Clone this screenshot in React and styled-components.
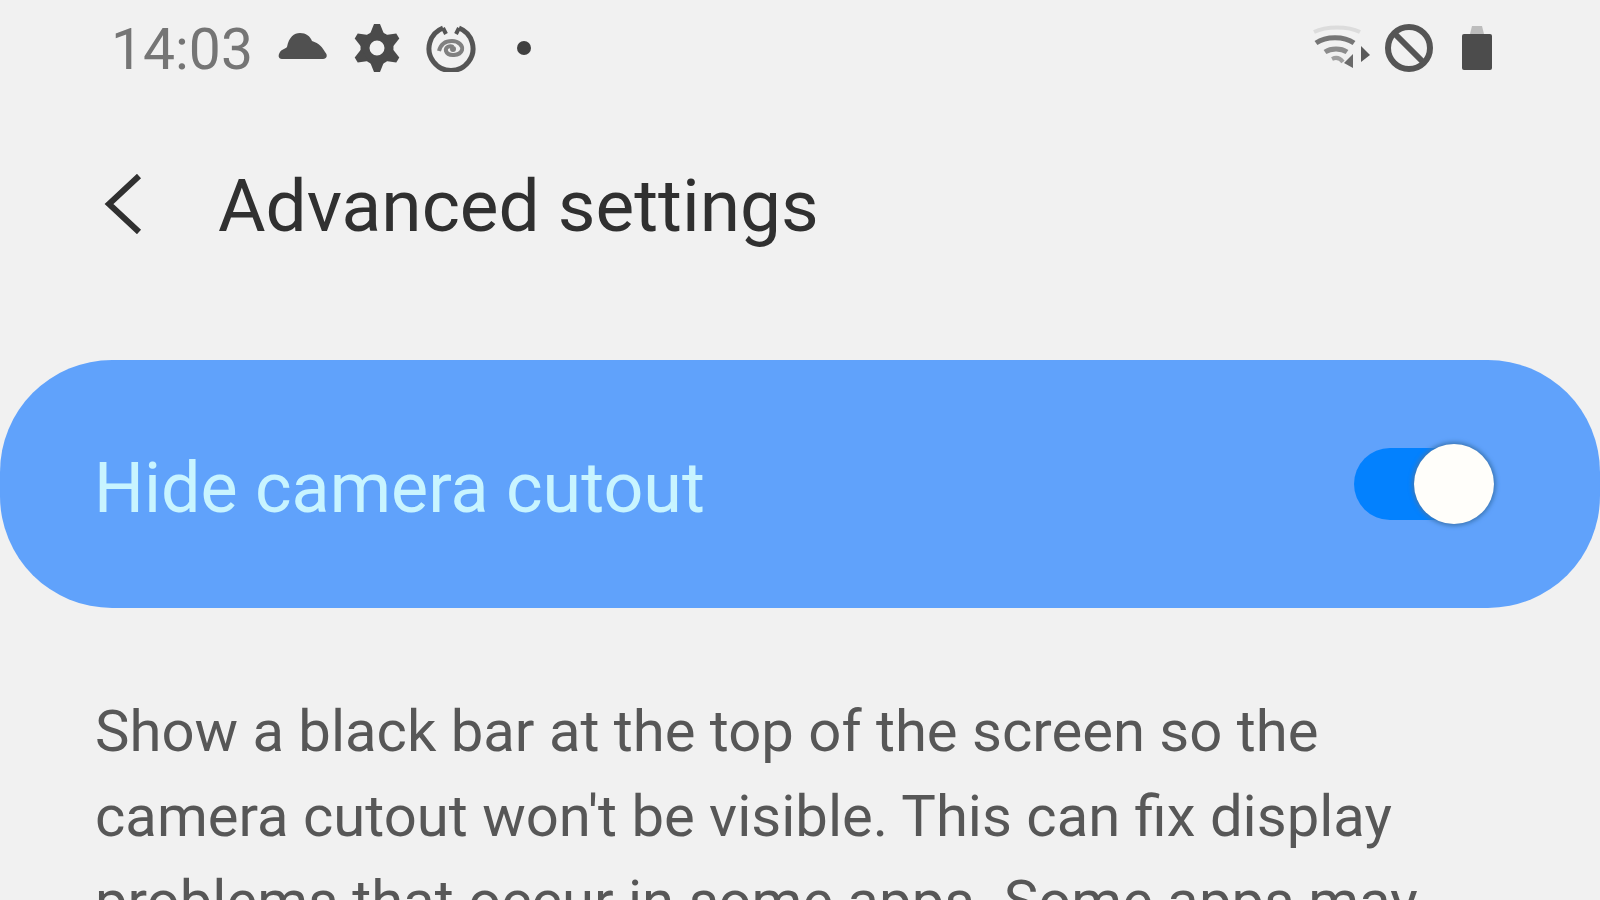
import React, { useState } from "react";
import styled, { createGlobalStyle } from "styled-components";

const GlobalStyle = createGlobalStyle`
  body {
    margin: 0;
    background: #f1f1f1;
  }
  * {
    box-sizing: border-box;
  }
`;

function CloudIcon() {
  return (
    <svg width='50' height='48' viewBox='0 0 50 48' aria-hidden='true'>
      <path
        d='M4 35 C0 35 0 31 2 28 C4 25 7 25 9 23 C11 13 16 9 22 9 C28 9 32 12 34 17 C41 19 45 24 47 28 C50 31 49 35 45 35 Z'
        fill='#505050'
      />
    </svg>
  );
}

function GearIcon() {
  const teeth = [0, 60, 120, 180, 240, 300];
  return (
    <svg width='48' height='48' viewBox='0 0 48 48' aria-hidden='true'>
      <circle cx='24' cy='24' r='12' fill='none' stroke='#4a4a4a' strokeWidth='9' />
      {teeth.map((angle) => (
        <path
          key={angle}
          d='M21 0 H27 L31 10 H17 Z'
          fill='#4a4a4a'
          transform={`rotate(${angle} 24 24)`}
        />
      ))}
    </svg>
  );
}

function SwirlIcon() {
  return (
    <svg width='50' height='48' viewBox='0 0 50 48' fill='none' aria-hidden='true'>
      <path d='M17 4 A22 22 0 1 0 33 4' stroke='#555' strokeWidth='5' />
      <path d='M17 4 L20 10 M33 4 L30 10' stroke='#555' strokeWidth='4' />
      <path
        d='M13 27 C15 19 20 17 26 17 C33 17 37 22 36 26 C34 32 22 33 20 27 C19 23 24 21 27 23'
        stroke='#808080'
        strokeWidth='4'
      />
      <circle cx='27' cy='25' r='3' fill='#808080' />
    </svg>
  );
}

function WifiIcon() {
  return (
    <svg width='58' height='48' viewBox='0 0 58 48' fill='none' aria-hidden='true'>
      <path d='M2 8 C14 2 36 2 48 8' stroke='#dcdcdc' strokeWidth='4' />
      <path d='M4 19 C14 12 32 12 42 19' stroke='#757575' strokeWidth='5' />
      <path d='M13 28 C19 24 29 24 35 28' stroke='#8c8c8c' strokeWidth='5' />
      <path d='M20 35 C24 33 28 34 31 38' stroke='#a0a0a0' strokeWidth='4' />
      <path d='M41 30 V44 L32 39 Z' fill='#6a6a6a' />
      <path d='M49 22 L58 31 L49 38 Z' fill='#5a5a5a' />
    </svg>
  );
}

function BlockedIcon() {
  return (
    <svg width='50' height='50' viewBox='0 0 50 50' fill='none' aria-hidden='true'>
      <circle cx='25' cy='25' r='21' stroke='#555' strokeWidth='6' />
      <path d='M10 10 L40 40' stroke='#555' strokeWidth='6' />
    </svg>
  );
}

function BatteryIcon() {
  return (
    <svg width='44' height='48' viewBox='0 0 44 48' aria-hidden='true'>
      <path d='M24 2 H34 L36 10 H22 Z' fill='#bdbdbd' />
      <path d='M16 10 H42 Q44 10 44 12 V44 Q44 46 42 46 H16 Q14 46 14 44 V12 Q14 10 16 10 Z' fill='#4c4c4c' />
    </svg>
  );
}

function BackIcon() {
  return (
    <svg width='38' height='60' viewBox='0 0 38 60' fill='none' aria-hidden='true'>
      <path d='M35 2 L5 30 L35 58' stroke='#303030' strokeWidth='6' />
    </svg>
  );
}

export default function App() {
  const [hidden, setHidden] = useState(true);

  return (
    <Screen>
      <GlobalStyle />
      <StatusBar>
        <StatusGroup>
          <Clock>14:03</Clock>
          <CloudIcon />
          <GearIcon />
          <SwirlIcon />
          <MoreDot />
        </StatusGroup>
        <StatusGroup $tight>
          <WifiIcon />
          <BlockedIcon />
          <BatteryIcon />
        </StatusGroup>
      </StatusBar>

      <Header>
        <BackButton aria-label='Back'>
          <BackIcon />
        </BackButton>
        <Title>Advanced settings</Title>
      </Header>

      <SwitchCard>
        <SwitchLabel htmlFor='cutout'>Hide camera cutout</SwitchLabel>
        <Switch
          id='cutout'
          type='checkbox'
          role='switch'
          checked={hidden}
          onChange={() => setHidden(!hidden)}
        />
      </SwitchCard>

      <Description>
        Show a black bar at the top of the screen so the camera cutout won't be
        visible. This can fix display problems that occur in some apps. Some
        apps may
      </Description>
    </Screen>
  );
}

const Screen = styled.main`
  height: 100vh;
  overflow: hidden;
  background: #f1f1f1;
  font-family: Roboto, "Liberation Sans", sans-serif;
`;

const StatusBar = styled.div`
  display: flex;
  justify-content: space-between;
  align-items: center;
  height: 96px;
  padding: 0 108px 0 111px;
`;

const StatusGroup = styled.div`
  display: flex;
  align-items: center;
  gap: ${(props) => (props.$tight ? "14px" : "25px")};
`;

const Clock = styled.span`
  padding-top: 4px;
  font-size: 57px;
  line-height: 64px;
  color: #757575;
`;

const MoreDot = styled.span`
  width: 14px;
  height: 14px;
  margin-left: 16px;
  border-radius: 50%;
  background: #404040;
`;

const Header = styled.header`
  display: flex;
  align-items: center;
  gap: 76px;
  height: 216px;
  padding: 0 104px;
`;

const BackButton = styled.button`
  display: flex;
  padding: 0;
  border: 0;
  background: none;
  cursor: pointer;
`;

const Title = styled.h1`
  margin: 0;
  padding-top: 4px;
  font-size: 73px;
  line-height: 84px;
  font-weight: 400;
  color: #303030;
`;

const SwitchCard = styled.section`
  display: flex;
  justify-content: space-between;
  align-items: center;
  height: 248px;
  margin-top: 48px;
  padding: 0 106px 0 94px;
  border-radius: 112px;
  background: #60a2fb;
`;

const SwitchLabel = styled.label`
  padding-top: 8px;
  font-size: 70px;
  line-height: 84px;
  color: #c8f4ff;
`;

const Switch = styled.input`
  appearance: none;
  display: flex;
  align-items: center;
  justify-content: ${(props) => (props.checked ? "flex-end" : "flex-start")};
  width: 140px;
  height: 72px;
  margin: 0;
  border-radius: 36px;
  background: ${(props) => (props.checked ? "#0381fe" : "#8f8f94")};
  cursor: pointer;

  &::before {
    content: "";
    flex: none;
    width: 80px;
    height: 80px;
    border-radius: 50%;
    background: #fffefa;
    box-shadow: 0 0 4px 2px #3c78b8;
  }
`;

const Description = styled.p`
  margin: 0;
  padding: 81px 150px 0 95px;
  font-size: 58px;
  line-height: 85px;
  color: #575757;
`;
